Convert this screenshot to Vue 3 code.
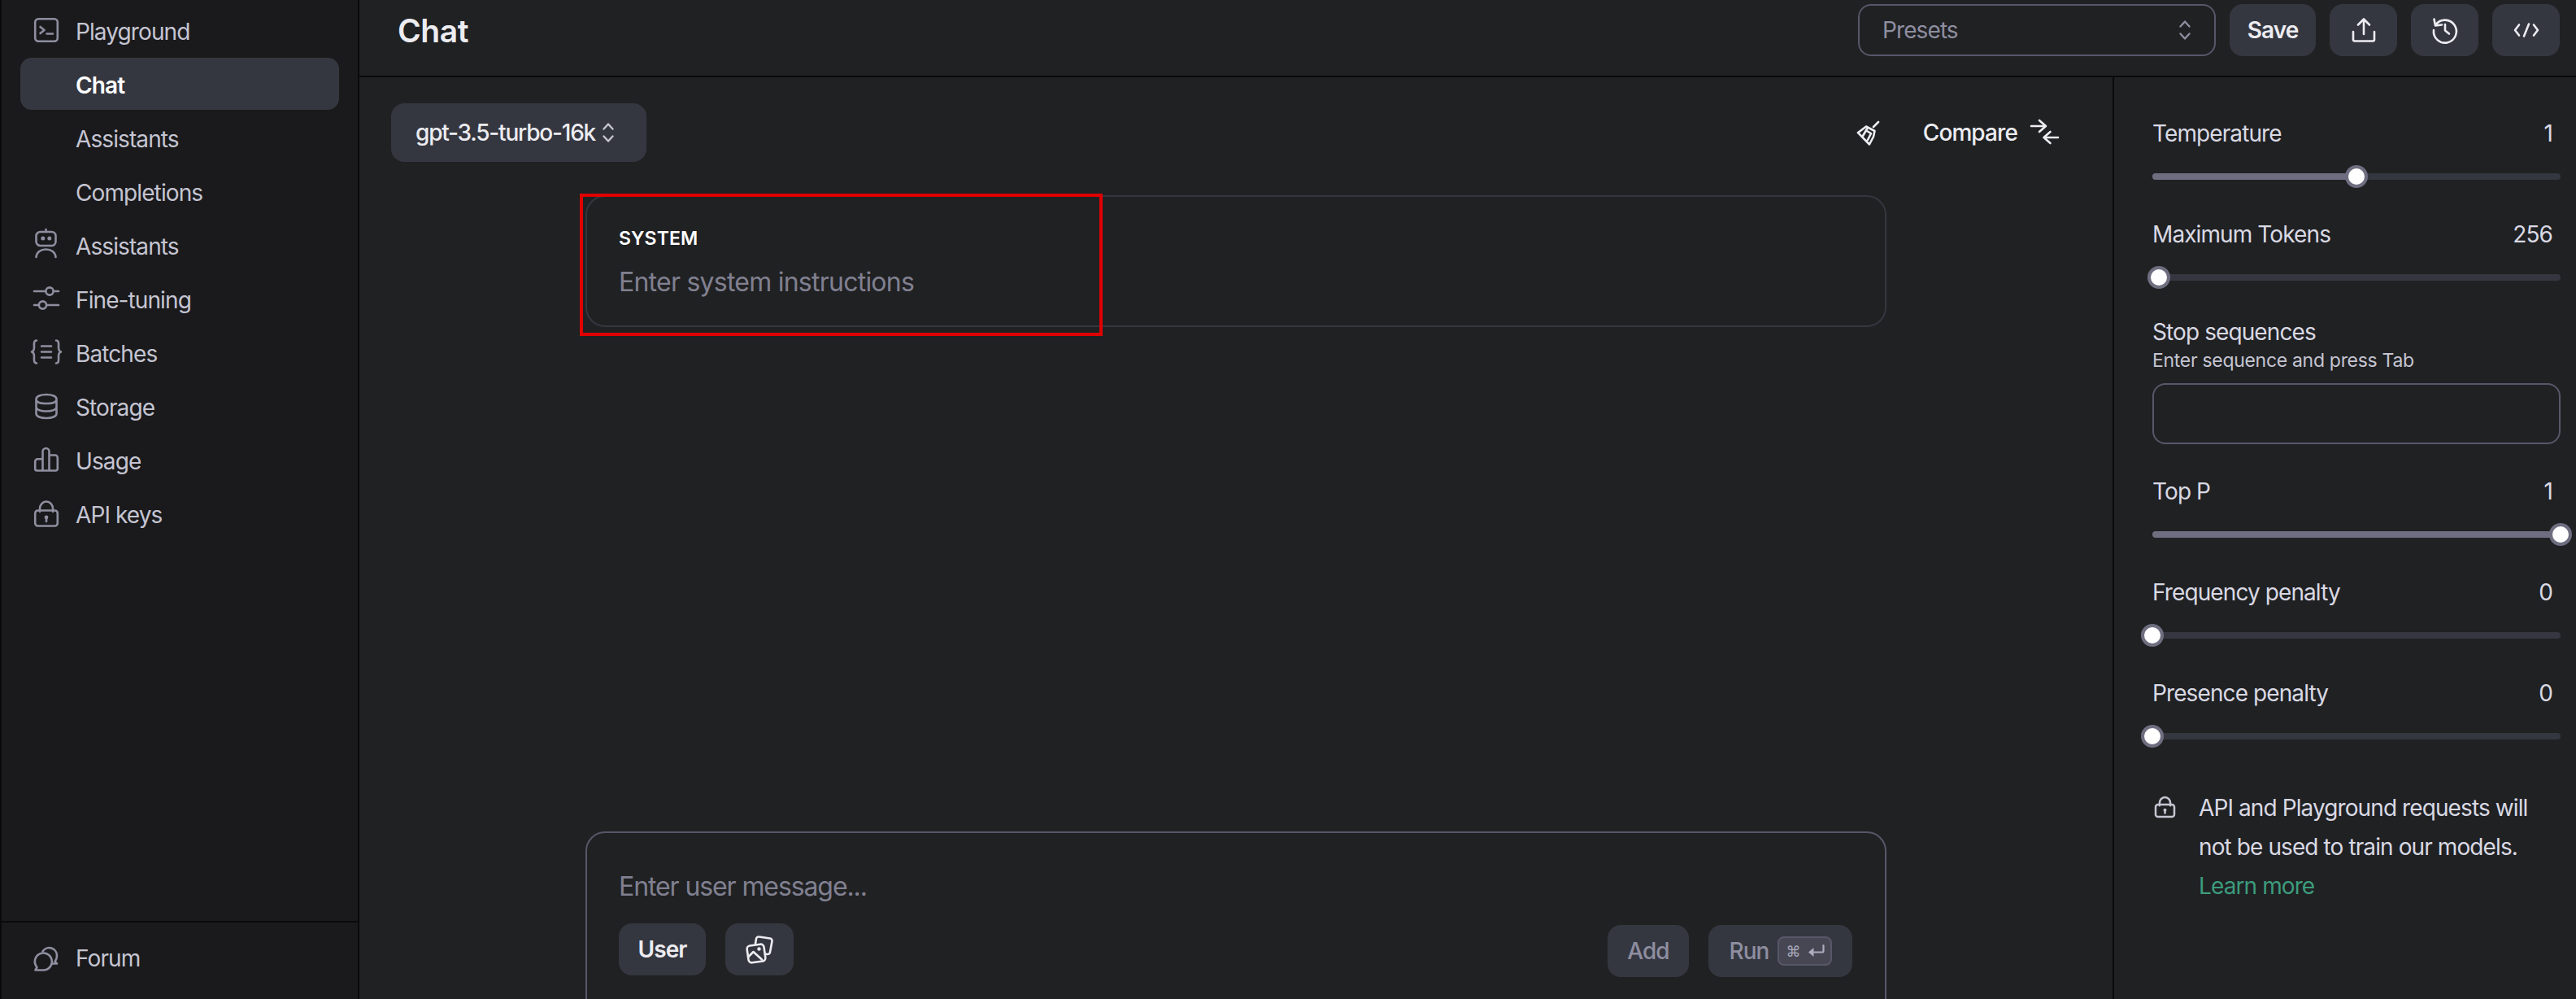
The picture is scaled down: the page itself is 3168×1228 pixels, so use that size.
<script setup>
const nav = [
  { label: 'Playground', icon: 'term' },
  { label: 'Chat', active: true },
  { label: 'Assistants' },
  { label: 'Completions' },
  { label: 'Assistants', icon: 'bot' },
  { label: 'Fine-tuning', icon: 'tune' },
  { label: 'Batches', icon: 'batch' },
  { label: 'Storage', icon: 'store' },
  { label: 'Usage', icon: 'usage' },
  { label: 'API keys', icon: 'lock' }
]
const firstSliders = [
  { label: 'Temperature', value: '1', pct: 50 },
  { label: 'Maximum Tokens', value: '256', pct: 1.6 }
]
const lastSliders = [
  { label: 'Top P', value: '1', pct: 100 },
  { label: 'Frequency penalty', value: '0', pct: 0 },
  { label: 'Presence penalty', value: '0', pct: 0 }
]
</script>

<template>
  <div class="app">
    <aside class="sidebar">
      <nav class="nav">
        <div v-for="item in nav" :key="item.label + item.icon" class="nav-row" :class="{ active: item.active }">
          <span class="nav-icon">
            <svg v-if="item.icon === 'term'" viewBox="0 0 30 30"><rect x="1.2" y="1.2" width="27.6" height="27.6" rx="4"/><path d="M7.5 11l5 4-5 4M15.5 19.5h7.5"/></svg>
            <svg v-else-if="item.icon === 'bot'" viewBox="0 0 30 30"><path d="M14.500 -4v3"/><rect x="2.500" y="-1" width="24" height="17" rx="5"/><circle class="fill" cx="10.800" cy="7" r="2.500"/><circle class="fill" cx="18.800" cy="7" r="2.500"/><path d="M2.500 30C3 24 8 20.500 14.500 20.500S26 24 26.500 30"/></svg>
            <svg v-else-if="item.icon === 'tune'" viewBox="0 0 30 30"><path d="M0 6h14M24 6h6M0 23h5.500M15.500 23H30"/><circle cx="19" cy="6" r="4.600"/><circle cx="10.500" cy="23" r="4.600"/></svg>
            <svg v-else-if="item.icon === 'batch'" viewBox="0 0 30 30"><path d="M3 .5C-1 .5 0 6 0 9c0 3-1.500 5-3 5.500 1.500.5 3 2.500 3 5.500 0 3-1 8.500 3 8.500M27 .5C31 .5 30 6 30 9c0 3 1.500 5 3 5.500-1.500.5-3 2.500-3 5.500 0 3 1 8.500-3 8.500M9 7.500h12M9 14.500h12M9 21.500h12"/></svg>
            <svg v-else-if="item.icon === 'store'" viewBox="0 0 30 30"><path d="M2.500 6.500C2.500 3 8 1 15 1s12.500 2 12.500 5.500v18C27.500 28 22 30 15 30S2.500 28 2.500 24.500zM2.500 7C2.500 10.500 8 12 15 12s12.500-1.500 12.500-5M2.500 17C4 20 9 21.500 15 21.500S26 20 27.500 17"/></svg>
            <svg v-else-if="item.icon === 'usage'" viewBox="0 0 30 30"><path d="M10.500 28.500H3.500a2.300 2.300 0 0 1-2.300-2.300v-9a3 3 0 0 1 3-3h6.300M10.500 28.500V5a4 4 0 0 1 8 0v23.500zM18.500 9.500h7.300a3 3 0 0 1 3 3v13.700a2.300 2.300 0 0 1-2.300 2.300h-8"/></svg>
            <svg v-else-if="item.icon === 'lock'" viewBox="0 0 30 30"><path d="M7 13V9.500C7 4.500 10.500 .5 15 .5s8 4 8 9V13"/><rect x="1.200" y="11.500" width="27.600" height="19" rx="3.500"/><circle class="fill" cx="15" cy="20" r="2.400"/><path d="M15 21v4"/></svg>
          </span>
          <span class="nav-text">{{ item.label }}</span>
        </div>
      </nav>
      <div class="side-foot">
        <div class="nav-row">
          <span class="nav-icon">
            <svg viewBox="0 0 30 30"><path d="M10.500 6.500A9.500 9.500 0 0 1 28 12c0 3-1 5.200-2.500 7l2.500 2.500h-6"/><path d="M11 29.500H1.500L3.500 26A10.500 10.500 0 1 1 11 29.500z"/></svg>
          </span>
          <span>Forum</span>
        </div>
        <div class="nav-row">
          <span class="nav-icon"><svg viewBox="0 0 30 30"><circle cx="15" cy="15" r="14"/></svg></span>
        </div>
      </div>
    </aside>

    <div class="content">
      <header class="topbar">
        <h1 class="title">Chat</h1>
        <div class="top-actions">
          <div class="presets">
            <span>Presets</span>
            <svg class="chev" viewBox="0 0 16 30"><path d="M2.500 10.500L8 4.500l5.500 6M2.500 19.500l5.500 6 5.500-6"/></svg>
          </div>
          <button class="btn save">Save</button>
          <button class="btn square">
            <svg class="ico" viewBox="0 0 30 30"><path d="M15 20V2M8 8.500L15 1.500l7 7M2 17v9.500a2 2 0 0 0 2 2h22a2 2 0 0 0 2-2V17"/></svg>
          </button>
          <button class="btn square">
            <svg class="ico" viewBox="0 0 30 30"><path d="M3.500 8.500A14 14 0 1 1 1 15M1.500 1.500l1.500 8 8-1M15 8v7.500l5 4"/></svg>
          </button>
          <button class="btn square">
            <svg class="ico" viewBox="0 0 30 30"><path d="M6 8.500L1 15l5 6.500M24 8.500l5 6.500-5 6.500M18 7.500l-6 15"/></svg>
          </button>
        </div>
      </header>

      <div class="body">
        <main class="main">
          <div class="toolbar">
            <button class="btn model">
              <span>gpt-3.5-turbo-16k</span>
              <svg class="chev light" viewBox="0 0 16 30"><path d="M2.500 10.500L8 4.500l5.500 6M2.500 19.500l5.500 6 5.500-6"/></svg>
            </button>
            <div class="tools">
              <svg class="broom" viewBox="0 0 30 30"><path d="M27 2l-6 6M2 15L12 7.500l10.500 5.500-1.500 7-5 9.500zM13 10.500L8 19M13 13l5 3-4 8"/></svg>
              <span class="compare">Compare</span>
              <svg class="swap" viewBox="0 0 34 30"><path d="M0 7h17.500M10 0l8 7-8 7M33 21H16.500M23.500 14l-8 7 8 7"/></svg>
            </div>
          </div>

          <div class="chat">
            <section class="card system">
              <div class="sys-label">SYSTEM</div>
              <div class="placeholder">Enter system instructions</div>
            </section>
          </div>

          <div class="composer-wrap">
            <section class="card composer">
              <div class="placeholder tight">Enter user message...</div>
              <div class="composer-row">
                <button class="btn user">User</button>
                <button class="btn image">
                  <svg class="img-ico" viewBox="0 0 34 36"><path d="M12 11l1-6a3 3 0 0 1 3.500-2.500L30 4.500a3 3 0 0 1 2.500 3.500L30 21.500a3 3 0 0 1-3.500 2.500L25 23.700"/><rect x="2.500" y="12.500" width="21" height="21" rx="4" transform="rotate(-8 13 23)"/><path d="M3.500 27L9.500 21 20 30.500"/><circle class="fill" cx="16.500" cy="17.500" r="2.200"/></svg>
                </button>
                <div class="spacer"></div>
                <button class="btn add">Add</button>
                <button class="btn run">
                  <span>Run</span>
                  <span class="kbd">
                    <span class="k1">⌘</span>
                    <svg class="k2" viewBox="0 0 20 16"><path d="M18.500 1v7a1.500 1.500 0 0 1-1.500 1.500H3"/><path class="fill" d="M0 9.500L6.500 4v11z"/></svg>
                  </span>
                </button>
              </div>
            </section>
          </div>
        </main>

        <aside class="panel">
          <div v-for="s in firstSliders" :key="s.label" class="setting">
            <div class="set-row"><span>{{ s.label }}</span><span>{{ s.value }}</span></div>
            <div class="slider">
              <div class="track"><div class="fill-bar" :style="{ width: s.pct + '%' }"></div></div>
              <div class="thumb" :style="{ left: s.pct + '%' }"></div>
            </div>
          </div>
          <div class="stop">
            <div class="set-row"><span>Stop sequences</span></div>
            <div class="hint">Enter sequence and press Tab</div>
            <div class="stop-input"></div>
          </div>
          <div v-for="s in lastSliders" :key="s.label" class="setting">
            <div class="set-row"><span>{{ s.label }}</span><span>{{ s.value }}</span></div>
            <div class="slider">
              <div class="track"><div class="fill-bar" :style="{ width: s.pct + '%' }"></div></div>
              <div class="thumb" :style="{ left: s.pct + '%' }"></div>
            </div>
          </div>
          <div class="note">
            <svg class="note-lock" viewBox="0 0 30 30"><path d="M7 13V9.500C7 4.500 10.500 .5 15 .5s8 4 8 9V13"/><rect x="1.200" y="11.500" width="27.600" height="18" rx="3.500"/><circle class="fill" cx="15" cy="19.500" r="2.400"/><path d="M15 20v4"/></svg>
            <p>API and Playground requests will not be used to train our models. <span class="learn">Learn more</span></p>
          </div>
        </aside>
      </div>
    </div>

    <div class="annotation"></div>
  </div>
</template>

<style>
html, body { margin: 0; background: #202123; }
</style>

<style scoped>
.app {
  position: relative;
  display: flex;
  width: 3168px;
  height: 1228px;
  overflow: hidden;
  background: #202123;
  color: #ececf1;
  font-family: Inter, "Liberation Sans", sans-serif;
  font-size: 28px;
  letter-spacing: -0.9px;
}
svg { display: block; overflow: visible; fill: none; stroke: currentColor; stroke-width: 2.6; stroke-linecap: round; stroke-linejoin: round; }
svg .fill { fill: currentColor; stroke: none; }
button { font: inherit; letter-spacing: inherit; border: 0; padding: 0; color: inherit; }

.sidebar {
  flex: none;
  width: 442px;
  box-sizing: border-box;
  display: flex;
  flex-direction: column;
  background: #1a1a1c;
  border-left: 2px solid #0a0a0b;
  border-right: 2px solid #0a0a0b;
}
.nav { flex: 1; padding: 5px 23px 0; display: flex; flex-direction: column; gap: 2px; }
.nav-row {
  flex: none;
  height: 64px;
  display: flex;
  align-items: center;
  gap: 21px;
  padding-left: 17px;
  border-radius: 14px;
  color: #c5c5d2;
}
.nav-text { padding-top: 3px; }
.nav-row.active { background: #353740; color: #fff; font-weight: 600; }
.nav-icon { flex: none; width: 30px; height: 30px; color: #8e8ea0; }
.nav-icon svg { width: 30px; height: 30px; }
.side-foot {
  flex: none;
  height: 96px;
  box-sizing: border-box;
  border-top: 2px solid #0a0a0b;
  padding: 12px 23px 0;
  display: flex;
  flex-direction: column;
  gap: 2px;
  overflow: hidden;
}

.content { flex: 1; min-width: 0; display: flex; flex-direction: column; }
.topbar {
  flex: none;
  height: 95px;
  box-sizing: border-box;
  border-bottom: 2px solid #0a0a0b;
  display: flex;
  justify-content: space-between;
  padding: 5px 20px 0 47px;
}
.title { margin: 0; font-size: 39px; line-height: 66px; font-weight: 600; color: #ececf1; letter-spacing: -0.4px; }
.top-actions { display: flex; gap: 17px; height: 64px; }
.presets {
  width: 440px;
  box-sizing: border-box;
  border: 2px solid #565869;
  border-radius: 16px;
  padding: 0 28px;
  display: flex;
  align-items: center;
  justify-content: space-between;
  color: #8e8ea0;
}
.chev { width: 16px; height: 30px; color: #8e8ea0; stroke-width: 2.4; }
.chev.light { color: #c5c5d2; }
.btn {
  background: #353740;
  border-radius: 16px;
  height: 64px;
  display: flex;
  align-items: center;
  justify-content: center;
  color: #ececf1;
  font-weight: 600;
}
.save { width: 106px; }
.square { width: 83px; }
.ico { width: 30px; height: 30px; }

.body { flex: 1; min-height: 0; display: flex; }
.main { flex: 1; min-width: 0; display: flex; flex-direction: column; }
.toolbar {
  flex: none;
  display: flex;
  justify-content: space-between;
  align-items: center;
  padding: 32px 66px 0 39px;
}
.btn.model {
  height: 72px;
  width: 314px;
  font-weight: 500;
  justify-content: flex-start;
  padding-left: 30px;
  gap: 8px;
  letter-spacing: -1.2px;
}
.tools { display: flex; align-items: center; }
.broom { width: 30px; height: 30px; color: #ececf1; }
.compare { margin-left: 52px; font-weight: 500; color: #ececf1; }
.swap { width: 34px; height: 30px; margin-left: 17px; color: #ececf1; }

.chat { flex: 1; min-height: 0; padding-top: 41px; }
.card {
  width: 1600px;
  margin: 0 auto;
  box-sizing: border-box;
  border-radius: 24px;
  padding-left: 39px;
  padding-right: 40px;
}
.system { height: 162px; border: 2px solid #353740; padding-top: 33px; }
.sys-label { font-size: 23px; font-weight: 600; line-height: 36px; color: #fff; letter-spacing: 0.1px; }
.placeholder { font-size: 32px; line-height: 40px; color: #808090; margin-top: 16px; letter-spacing: -0.76px; }
.placeholder.tight { letter-spacing: -1.1px; }
.composer-wrap { flex: none; height: 206px; overflow: hidden; }
.composer { height: 240px; border: 2px solid #565869; padding-top: 30px; }
.composer .placeholder { margin-top: 16px; }
.composer-row { display: flex; margin-top: 25px; gap: 24px; }
.btn.user { width: 107px; }
.btn.image { width: 84px; }
.img-ico { width: 34px; height: 36px; }
.spacer { flex: 1; }
.btn.add { width: 100px; margin-top: 2px; color: #8e8ea0; font-weight: 500; }
.btn.run { width: 177px; margin-top: 2px; color: #8e8ea0; font-weight: 500; gap: 10px; }
.kbd {
  width: 67px;
  height: 36px;
  box-sizing: border-box;
  border: 2px solid #565869;
  border-radius: 8px;
  background: #464752;
  display: flex;
  align-items: center;
  justify-content: space-between;
  padding: 0 7px 0 9px;
  color: #acacbe;
  font-family: "DejaVu Sans", sans-serif;
  font-size: 18px;
  font-weight: 400;
  letter-spacing: 0;
}
.k2 { width: 20px; height: 16px; stroke-width: 2.2; }

.panel {
  flex: none;
  width: 570px;
  box-sizing: border-box;
  border-left: 2px solid #0a0a0b;
  padding: 49px 19px 0 47px;
  color: #d9d9e3;
}
.setting { margin-bottom: 37px; }
.set-row { display: flex; justify-content: space-between; line-height: 40px; padding-right: 10px; }
.slider { position: relative; height: 28px; margin-top: 19px; display: flex; align-items: center; }
.track { width: 100%; height: 8px; border-radius: 4px; background: #353740; overflow: hidden; }
.fill-bar { height: 100%; background: #6e6e80; }
.thumb {
  position: absolute;
  top: 0;
  width: 28px;
  height: 28px;
  box-sizing: border-box;
  transform: translateX(-50%);
  border-radius: 50%;
  background: #fff;
  border: 4px solid #6e6e80;
}
.stop { margin-bottom: 38px; margin-top: -4px; }
.hint { font-size: 23px; line-height: 30px; color: #c5c5d2; letter-spacing: -0.3px; }
.stop-input {
  height: 75px;
  box-sizing: border-box;
  margin-top: 13px;
  border: 2px solid #565869;
  border-radius: 16px;
}
.note { display: flex; gap: 29px; margin-top: 50px; padding-left: 3px; }
.note-lock { flex: none; width: 25px; height: 26px; margin-top: 10px; color: #c5c5d2; stroke-width: 3; }
.note p { margin: 0; line-height: 48px; width: 430px; color: #d9d9e3; }
.learn { color: #3c9c7d; }

.annotation {
  position: absolute;
  left: 713px;
  top: 238px;
  width: 643px;
  height: 175px;
  box-sizing: border-box;
  border: 4px solid #e00000;
  pointer-events: none;
}
</style>
